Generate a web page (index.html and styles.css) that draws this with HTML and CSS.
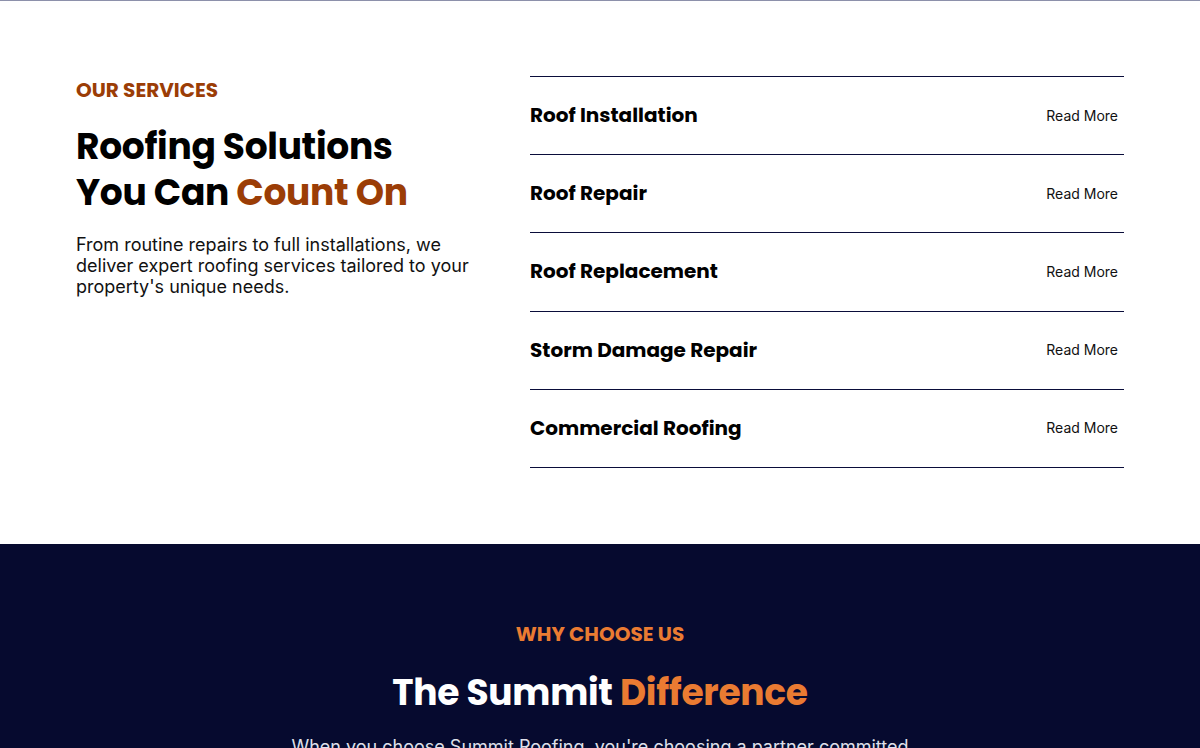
FILE: index.html
```html
<!DOCTYPE html>
<html lang="en">

<head>
    <meta charset="UTF-8">
    <meta name="viewport" content="width=device-width, initial-scale=1.0">
    <title>Summit Roofing</title>
    <link rel="stylesheet" href="styles.css">
</head>

<body>
    <div class="top-bar"></div>

    <!-- Services -->
    <section class="services">
        <div class="services-intro">
            <p class="eyebrow">OUR SERVICES</p>
            <h2>Roofing Solutions<br>You Can <span class="accent">Count On</span></h2>
            <p class="lead">From routine repairs to full installations, we deliver expert roofing services tailored to your property's unique needs.</p>
        </div>

        <ul class="service-list">
            <li><span class="service-name">Roof Installation</span><a href="#">Read More</a></li>
            <li><span class="service-name">Roof Repair</span><a href="#">Read More</a></li>
            <li><span class="service-name">Roof Replacement</span><a href="#">Read More</a></li>
            <li><span class="service-name">Storm Damage Repair</span><a href="#">Read More</a></li>
            <li><span class="service-name">Commercial Roofing</span><a href="#">Read More</a></li>
        </ul>
    </section>

    <!-- Why choose us -->
    <section class="why">
        <p class="eyebrow">WHY CHOOSE US</p>
        <h2>The Summit <span class="accent">Difference</span></h2>
        <p class="lead">When you choose Summit Roofing, you're choosing a partner committed to quality, honesty and lasting protection for your home.</p>
    </section>
</body>

</html>
```

FILE: styles.css
```css
body {
    margin: 0;
    font-family: Inter, "Liberation Sans", Arial, sans-serif;
    color: #111;
    background-color: #ffffff;
}

.top-bar {
    height: 1px;
    background-color: #8c90aa;
    box-shadow: 0 2px 8px rgba(20, 24, 60, 0.08);
}

h2,
.eyebrow,
.service-name {
    font-family: Poppins, Inter, "Liberation Sans", sans-serif;
}

.services {
    display: flex;
    gap: 50px;
    padding: 75px 76px 76px;
}

.services-intro {
    width: 404px;
    flex-shrink: 0;
}

.eyebrow {
    margin: 0;
    font-size: 20px;
    font-weight: 700;
    color: #9b3d06;
    line-height: 28px;
}

h2 {
    margin: 20px 0 0;
    font-size: 36px;
    font-weight: 700;
    line-height: 46px;
    color: #000;
    letter-spacing: -0.3px;
}

.accent {
    color: #9b3d06;
}

.lead {
    margin: 18px 0 0;
    font-size: 18px;
    line-height: 21px;
    color: #111;
}

.service-list {
    flex: 1;
    list-style: none;
    margin: 0;
    padding: 0;
    border-top: 1px solid #0a0d3a;
}

.service-list li {
    display: flex;
    justify-content: space-between;
    align-items: center;
    box-sizing: border-box;
    height: 78.2px;
    padding-right: 6px;
    padding-bottom: 1px;
    border-bottom: 1px solid #0a0d3a;
}

.service-name {
    font-size: 20px;
    font-weight: 700;
    color: #000;
}

.service-list a {
    font-size: 14px;
    color: #111;
    text-decoration: none;
}

.why {
    background-color: #060a2f;
    padding: 76px 76px 0;
    height: 204px;
    text-align: center;
    overflow: hidden;
}

.why .eyebrow {
    color: #ea7b32;
}

.why h2 {
    margin-top: 21px;
    line-height: 47px;
    color: #fff;
}

.why .accent {
    color: #ea7b32;
}

.why .lead {
    max-width: 630px;
    margin: 17px auto 0;
    font-size: 18px;
    line-height: 27px;
    color: #dfe0ea;
}
```
